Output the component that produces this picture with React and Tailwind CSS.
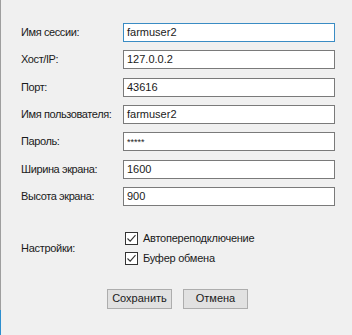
import React from "react";

const font = { fontFamily: '"Liberation Sans", Arial, sans-serif' };

const rows = [
  ["Имя сессии:", "farmuser2", true],
  ["Хост/IP:", "127.0.0.2"],
  ["Порт:", "43616"],
  ["Имя пользователя:", "farmuser2"],
  ["Пароль:", "*****"],
  ["Ширина экрана:", "1600"],
  ["Высота экрана:", "900"],
];

function Check() {
  return (
    <span className="w-[13px] h-[13px] border border-[#333333] bg-white flex items-center justify-center shrink-0">
      <svg width="11" height="11" viewBox="0 0 11 11">
        <path d="M1.5 5.5 L4.2 8.2 L9.5 2.2" fill="none" stroke="#333333" strokeWidth="1.1" />
      </svg>
    </span>
  );
}

export default function App() {
  return (
    <div className="w-[352px] h-[335px] bg-[#f0f0f0] flex text-[#1a1a1a] text-[11px] whitespace-nowrap" style={font}>
      <div className="w-[1px] h-full flex flex-col">
        <div className="flex-1 bg-[#9e9e9e]" />
        <div className="h-[25px] bg-[#2d8ecf]" />
      </div>
      <div className="flex-1 flex flex-col pl-[20px] pt-[23px]">
        <div className="flex flex-col gap-[8.33px]">
          {rows.map(([label, value, focused]) => (
            <div key={label} className="flex items-center h-[19px]">
              <div className="w-[102px] leading-none tracking-[-0.4px]">{label}</div>
              <div
                className={
                  "w-[212px] h-[19px] bg-white border flex items-center pl-[3px] leading-none " +
                  (focused ? "border-[#3a8cc4]" : "border-[#7a7a7a]")
                }
              >
                {value === "*****" ? <span className="text-[9px] pt-[1px]">{value}</span> : value}
              </div>
            </div>
          ))}
        </div>
        <div className="flex items-center mt-[26px]">
          <div className="w-[104px] leading-none pt-[1px] tracking-[-0.3px]">Настройки:</div>
          <div className="flex flex-col gap-[7px] tracking-[-0.25px]">
            <label className="flex items-center gap-[5px] h-[13px] leading-none">
              <Check />
              <span>Автопереподключение</span>
            </label>
            <label className="flex items-center gap-[5px] h-[13px] leading-none">
              <Check />
              <span>Буфер обмена</span>
            </label>
          </div>
        </div>
        <div className="flex gap-[11px] mt-[24px] pl-[86px]">
          <button className="w-[65px] h-[20px] bg-[#e1e1e1] border border-[#adadad] leading-none flex items-center justify-center">
            Сохранить
          </button>
          <button className="w-[65px] h-[20px] bg-[#e1e1e1] border border-[#adadad] leading-none flex items-center justify-center">
            Отмена
          </button>
        </div>
      </div>
    </div>
  );
}
